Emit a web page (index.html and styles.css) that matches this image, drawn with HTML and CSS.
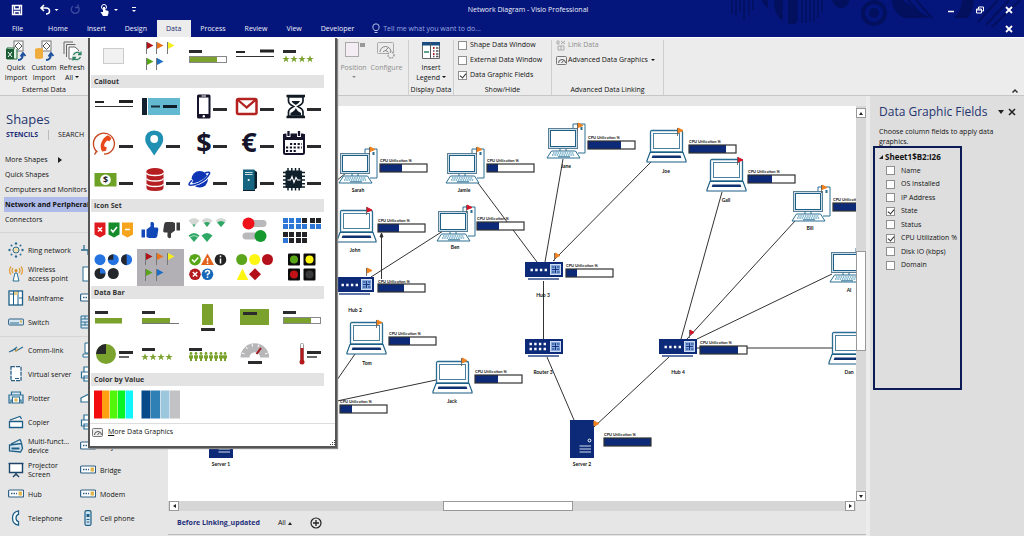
FILE: index.html
```html
<!DOCTYPE html>
<html lang="en">
<head>
<meta charset="utf-8">
<title>Network Diagram - Visio Professional</title>
<link rel="stylesheet" href="styles.css">
</head>
<body>
<svg class="defs" aria-hidden="true">
  <defs>
    <g id="flag"><path d="M0.5 0v12" stroke="#777" fill="none"/><path d="M1 0L7.500 3.500L1 7z"/></g>
    <path id="star" d="M0-3.700L1-1.100L3.700-1.100L1.500 0.500L2.300 3.200L0 1.600L-2.300 3.200L-1.500 0.500L-3.700-1.100L-1-1.100z" fill="#7aa22c"/>
    <rect id="dash" x="29" y="20" width="14" height="3" fill="#2b2b2e"/>
    <rect id="cap" x="5" y="12" width="13" height="3" fill="#2b2b2e"/>
    <g id="quad"><rect width="5" height="5"/><rect x="6" width="5" height="5"/><rect y="6" width="5" height="5"/><rect x="6" y="6" width="5" height="5"/></g>
    <g id="wifi"><path d="M-5.500 2.500Q0-2.500 5.500 2.500L0 9z"/></g>
    <g id="person"><circle cy="1.500" r="1.400"/><path d="M-2 3.200h4v3.300h-1v2.500h-2v-2.500h-1z"/></g>
    <g id="desktop">
      <path d="M25 2v-6h12v29h-7" fill="#fff" stroke="#2b6e93"/><rect x="32.500" y="-1" width="2" height="3" fill="#2b6e93"/>
      <rect x="0.500" y="0.500" width="29" height="20" fill="#cfdfe9" stroke="#5b7f95"/><rect x="2.500" y="2.500" width="25" height="16" fill="#fff" stroke="#1d5f86"/>
      <path d="M12 20.500v3h6v-3M9 23.500h12" fill="none" stroke="#2b6e93"/>
      <path d="M3.500 23h24l4.500 7h-33z" fill="#fff" stroke="#2b6e93"/>
      <path d="M5 25h21M4 27h23" stroke="#1e7fa8" stroke-width="1.200" stroke-dasharray="1.500 .8"/><path d="M10 28.800h12" stroke="#2b6e93"/>
    </g>
    <g id="laptop">
      <path d="M0.500 22V2Q0.500 0.500 2 0.500H31Q32.500 0.500 32.500 2V22z" fill="#fff" stroke="#2b6e93" stroke-width="1.300"/>
      <rect x="3.500" y="3.500" width="26" height="15" fill="#fff" stroke="#4c7f9d"/>
      <path d="M0 22.500h33l3 8v1.500h-39v-1.500z" fill="#fff" stroke="#1d5f86" stroke-width="1.200"/>
      <path d="M2.500 25.500h28l.8 2.500h-29.600z" fill="#10316f"/>
    </g>
    <g id="hub"><rect width="38" height="15" fill="#0c2a78"/><path d="M3 17h31" stroke="#0c2a78" stroke-width="1.300"/>
      <rect x="25.500" y="2.500" width="10" height="10" fill="#86a9dd" stroke="#cfdcf2"/><path d="M27 5h2.500M32 5h2.500M27 10h2.500M32 10h2.500M30.500 4v7M27 7.500h7" stroke="#0c2a78" stroke-width=".9"/></g>
    <path id="ports" d="M5.500 8h17" stroke="#fff" stroke-width="2.400" stroke-dasharray="2.400 2.300"/>
    <g id="server"><rect width="24" height="38" fill="#0c2a78"/><circle cx="19.500" cy="20.500" r="1.400" fill="none" stroke="#fff"/><path d="M9.500 26h11.500M9.500 29h11.500M9.500 32h11.500" stroke="#d5dff0" stroke-width="1.200"/></g>
    <rect id="frame" width="47" height="8" fill="none" stroke="#333" stroke-width="1.200"/>
    <g id="printer" fill="#fff" stroke="#2b6e93" stroke-width="1.200"><path d="M4 6V1h9v5M1.500 6h13v6h-13zM4 10h8v5H4z"/></g>
    <g id="box"><rect x=".600" y="4" width="15" height="7" rx="1" fill="#fff" stroke="#2b5f86" stroke-width="1.200"/><path d="M3 7.500h6" stroke="#2b5f86" stroke-width="1.300" stroke-dasharray="1.500 1"/><rect x="10.500" y="5.500" width="3.500" height="4" fill="#e0b34b"/></g>
    <g id="gauge" fill="none" stroke="#777"><rect x=".500" y="1.500" width="10" height="8" rx="1" fill="#eee"/><path d="M2.500 8a3.500 3.500 0 0 1 7 0M5.500 8l2-2.500" stroke="#555"/></g>
  </defs>
</svg>

<div class="app">
  <header class="top">
    <svg class="art" viewBox="0 0 300 28" aria-hidden="true">
      <g stroke="#03105e" stroke-width="1.500" fill="none">
        <path d="M8 0v14M12 0v15M16 0v12M20 0v20M25 0v15M29 0v10" /><path d="M73 0v22M78 0v23M82 0v23M86 0v22M90 0v21M94 0v18M98 0v12"/>
        <path d="M176 0l16 18M184 0l16 18M192 0l16 18M262 25L285 0M254 22L274 0M268 27L296 0" stroke-width="2"/>
        <circle cx="150" cy="13" r="11" stroke-width="4"/>
      </g>
      <g fill="#03105e"><path d="M38 0h6v8q-5-3-6-8zM50 0h9v21q-9-5-9-21zM64 0h8v24h-8z"/><circle cx="150" cy="13" r="5"/><path d="M108 0h18q-3 8-9 8t-9-8zM168 0h10l28 18h-26q-12-6-12-18zM238 0h12q-1 12-6 18h-14q8-8 8-18z"/></g>
    </svg>
    <div class="titlebar">
      <div class="quick">
        <button aria-label="Save"><svg width="12" height="12" viewBox="0 0 12 12"><path d="M1.500 1.500h9v9h-9zM3.500 1.500v3.500h5V1.500M3.500 10.500V7.500h5v3" fill="none" stroke="#fff" stroke-width="1.400"/></svg></button>
        <button class="wide" aria-label="Undo"><svg width="20" height="12" viewBox="0 0 20 12"><path d="M5 1L2 4l3 3M2 4h5q3.500 0 3.500 3T7 10" fill="none" stroke="#fff" stroke-width="1.600"/><path d="M15.500 5h4l-2 2z" fill="#fff"/></svg></button>
        <button aria-label="Repeat"><svg width="12" height="12" viewBox="0 0 12 12"><path d="M8.500 2A4 4 0 1 1 4 2M9 .500v3h-3" fill="none" stroke="#3a4a9e" stroke-width="1.300"/></svg></button>
        <button class="wide touch" aria-label="Touch mode"><svg width="20" height="12" viewBox="0 0 20 12"><circle cx="5" cy="3" r="2.500" fill="none" stroke="#fff"/><path d="M4 3h2v3l3.500 1v2.500L8.500 12H4L1.500 8h2.500z" fill="#fff"/><path d="M15 5h4l-2 2z" fill="#fff"/></svg></button>
        <button class="custom" aria-label="Customize"><svg width="6" height="8" viewBox="0 0 6 8"><path d="M1 1.500h4" stroke="#fff"/><path d="M1 4h4L3 6z" fill="#fff"/></svg></button>
      </div>
      <h1>Network Diagram - Visio Professional</h1>
      <div class="winbtns">
        <button aria-label="Minimize"><svg width="10" height="10" viewBox="0 0 10 10"><path d="M2 6.500h6" stroke="#fff" stroke-width="1.500"/></svg></button>
        <button aria-label="Restore"><svg width="10" height="10" viewBox="0 0 10 10"><path d="M3.500 4V2h5v4h-1.500M1.500 4h5v4h-5zM1.500 5h5" fill="none" stroke="#fff"/></svg></button>
        <button aria-label="Close"><svg width="10" height="10" viewBox="0 0 10 10"><path d="M2 2l6 6M8 2l-6 6" stroke="#fff" stroke-width="1.800"/></svg></button>
      </div>
    </div>
    <nav class="tabs">
      <button class="file">File</button><button>Home</button><button>Insert</button><button>Design</button><button class="on">Data</button><button>Process</button><button>Review</button><button>View</button><button>Developer</button>
      <label class="tell"><svg width="8" height="11" viewBox="0 0 8 11"><path d="M2.500 7.500Q.8 5.500.8 4a3.200 3.200 0 0 1 6.400 0q0 1.500-1.700 3.500zM2.500 9.500h3" fill="none" stroke="#b9c2ea"/></svg><input type="text" aria-label="Tell me" placeholder="Tell me what you want to do..."></label>
      <button class="closedoc" aria-label="Close document"><svg width="10" height="10" viewBox="0 0 10 10"><path d="M2 2l6 6M8 2l-6 6" stroke="#fff" stroke-width="1.800"/></svg></button>
    </nav>
  </header>

  <section class="ribbon">
    <div class="group external">
      <div class="bigs">
        <button class="big"><svg width="22" height="22" viewBox="0 0 22 22"><rect x="9" y="1" width="9" height="10" fill="#fff" stroke="#777"/><path d="M10 6l3.500-3.500L17 6l-3.500 3.500z" fill="none" stroke="#555"/><path d="M2 8h8M2 8v11h10V9" fill="#dff0e4" stroke="#1e6b3a"/><rect x="1" y="9" width="8" height="10" fill="#1b5e36"/><path d="M3 12l4 5M7 12l-4 5" stroke="#fff"/><path d="M13 20q5 0 5-6M15.500 16.500L18 13l2.500 3" fill="none" stroke="#1c4f9c" stroke-width="1.800"/></svg><span>Quick<br>Import</span></button>
        <button class="big"><svg width="22" height="22" viewBox="0 0 22 22"><rect x="9" y="1" width="9" height="10" fill="#fff" stroke="#777"/><path d="M10 6l3.500-3.500L17 6l-3.500 3.500z" fill="none" stroke="#555"/><path d="M2 9q4-2 8 0v9q-4 2-8 0z" fill="#f0ac3c"/><path d="M13 20q5 0 5-6M15.500 16.500L18 13l2.500 3" fill="none" stroke="#1c4f9c" stroke-width="1.800"/></svg><span>Custom<br>Import</span></button>
        <button class="big"><svg width="22" height="22" viewBox="0 0 22 22"><path d="M3 14V2h9M5.500 17V4.500h9" fill="none" stroke="#666"/><path d="M8 7h6l3.500 3v9H8z" fill="#fff" stroke="#666"/><circle cx="16" cy="16" r="5" fill="#ececec"/><path d="M12.500 15a4 4 0 0 1 7-1M19.500 17a4 4 0 0 1-7 1M20 11.500v3h-3M12 20.500v-3h3" fill="none" stroke="#2c8560" stroke-width="1.300"/></svg><span>Refresh<br>All <i class="car"></i></span></button>
      </div>
      <div class="gname">External Data</div>
    </div>

    <div class="gallery">
      <div class="menu">
        <div class="cells">
          <button aria-label="No data graphic"><svg viewBox="0 0 47 37"><rect x="13.500" y="10.500" width="20" height="15" fill="#f1f1f1" stroke="#ccc"/></svg></button>
          <button aria-label="Flags"><svg viewBox="0 0 47 37"><use href="#flag" x="9" y="4" fill="#b01318"/><use href="#flag" x="19" y="4" fill="#e8731d"/><use href="#flag" x="30" y="4" fill="#f4ef1e"/><use href="#flag" x="9" y="20" fill="#58a618"/><use href="#flag" x="19" y="20" fill="#1e6fc4"/></svg></button>
          <button aria-label="Progress bar"><svg viewBox="0 0 47 37"><use href="#cap"/><rect x="5.500" y="18.500" width="37" height="6" fill="#fff" stroke="#888"/><rect x="6" y="19" width="27" height="5" fill="#7aa22c"/></svg></button>
          <button aria-label="Text line"><svg viewBox="0 0 47 37"><path d="M5 14h9" stroke="#222" stroke-width="2"/><path d="M29 13h14" stroke="#222" stroke-width="3"/><path d="M5 18.500h38" stroke="#333"/></svg></button>
          <button aria-label="Stars"><svg viewBox="0 0 47 37"><use href="#cap"/><use href="#star" x="8" y="21"/><use href="#star" x="16" y="21"/><use href="#star" x="24" y="21"/><use href="#star" x="32" y="21"/></svg></button>
        </div>
        <h2>Callout</h2>
        <div class="cells">
          <button aria-label="Text callout"><svg viewBox="0 0 47 37"><path d="M5 14h9" stroke="#222" stroke-width="2"/><path d="M29 13.500h14" stroke="#222" stroke-width="3"/><path d="M5 18.500h38" stroke="#333"/></svg></button>
          <button aria-label="Card callout"><svg viewBox="0 0 47 37"><rect x="5" y="10" width="5" height="17" fill="#10202e"/><rect x="11" y="10" width="32" height="17" fill="#62b9d0"/><path d="M14 18.500h9" stroke="#1a2b3a" stroke-width="2"/><path d="M26 18.500h14" stroke="#101c28" stroke-width="3"/></svg></button>
          <button aria-label="Phone"><svg viewBox="0 0 47 37"><rect x="13" y="6.500" width="13.500" height="24" rx="1.500" fill="#15142a"/><rect x="15" y="9.500" width="9.500" height="16.500" fill="#fff"/><path d="M17.500 8h4.500" stroke="#fff"/><circle cx="19.800" cy="28.200" r="1.200" fill="#fff"/><use href="#dash"/></svg></button>
          <button aria-label="Mail"><svg viewBox="0 0 47 37"><rect x="6" y="11" width="19.500" height="15" rx="1.500" fill="#fff" stroke="#b3221f" stroke-width="2.500"/><path d="M7 12l8.700 7.500L24.500 12" fill="none" stroke="#b3221f" stroke-width="2.300"/><use href="#dash"/></svg></button>
          <button aria-label="Hourglass"><svg viewBox="0 0 47 37"><path d="M8.500 8h18.500M8.500 29h18.500" stroke="#101a24" stroke-width="2.500"/><path d="M10.500 9v4q0 3 5 5.500q-5 2.500-5 5.500v4h14.500v-4q0-3-5-5.500q5-2.500 5-5.500V9z" fill="#fff" stroke="#101a24" stroke-width="1.700"/><path d="M13.500 13h8.500q-1 2.500-4.200 4q-3.300-1.500-4.300-4zM17.800 20q1 3 5.200 5v2.500h-10.500V25q4.300-2 5.300-5z" fill="#101a24"/><use href="#dash"/></svg></button>
          <button aria-label="Call"><svg viewBox="0 0 47 37"><path d="M7.500 27A10.500 10.500 0 1 1 14 29.200M4.500 29.500Q6.500 28 6.200 25" fill="none" stroke="#c4441c" stroke-width="1.300"/><path d="M18.500 10.500l3 2.800-2 3-2.500-.8q-3.200 3-2.700 6l2.400.8-.6 3.500-4 .7q-3-5 0-10.500t6.400-5.500z" fill="#e8481a"/><use href="#dash"/></svg></button>
          <button aria-label="Pin"><svg viewBox="0 0 47 37"><path d="M17.200 5.500q9 .500 9 9q0 4-5 10l-4 6l-4-6q-5-6-5-10q0-8.500 9-9z" fill="#1f8fb2"/><circle cx="17.200" cy="14" r="3.900" fill="#fff"/><use href="#dash"/></svg></button>
          <button aria-label="Dollar"><svg viewBox="0 0 47 37"><text class="cur" x="20" y="27">$</text><use href="#dash"/></svg></button>
          <button aria-label="Euro"><svg viewBox="0 0 47 37"><text class="cur" x="18" y="27">€</text><use href="#dash"/></svg></button>
          <button aria-label="Calendar"><svg viewBox="0 0 47 37"><rect x="6" y="9.500" width="20" height="19.500" rx="1.500" fill="#fff" stroke="#15142a" stroke-width="2"/><path d="M5 9h22v6H5z" fill="#15142a"/><path d="M10.500 6v6M21 6v6" stroke="#fff" stroke-width="4"/><path d="M10.500 6v5M21 6v5" stroke="#15142a" stroke-width="2.300"/><path d="M12 19h12M8 22.500h16M8 26h10" stroke="#15142a" stroke-width="2.200" stroke-dasharray="2.200 1.600"/><use href="#dash"/></svg></button>
          <button aria-label="Money"><svg viewBox="0 0 47 37"><rect x="4.500" y="11" width="22" height="13.500" fill="#6ea227"/><circle cx="15.500" cy="17.800" r="5.300" fill="#fff"/><text class="coin" x="15.500" y="21">$</text><use href="#dash"/></svg></button>
          <button aria-label="Database"><svg viewBox="0 0 47 37"><path d="M9.500 9v17q0 3 8.500 3t8.500-3V9z" fill="#b51f22"/><ellipse cx="18" cy="9" rx="8.500" ry="3" fill="#b51f22"/><path d="M9.500 11q1 2.500 8.500 2.500t8.500-2.500M9.500 16.500q1 2.500 8.500 2.500t8.500-2.500M9.500 22q1 2.500 8.500 2.500t8.500-2.500" fill="none" stroke="#fff" stroke-width="1.400"/><use href="#dash"/></svg></button>
          <button aria-label="Planet"><svg viewBox="0 0 47 37"><circle cx="15.700" cy="17.300" r="8.300" fill="#0d35b5"/><path d="M22 10.500q5-1.500 4 1.200q-3 6-11 9.500q-8 3-10 1.500q-.500-2 3.500-5" fill="none" stroke="#fff" stroke-width="3"/><path d="M20.500 11q6-2 5 .7q-3 6-11 9.500q-8 3-9.500 1.500q-.3-1.500 3-4.500" fill="none" stroke="#0d35b5" stroke-width="1.500"/><use href="#dash"/></svg></button>
          <button aria-label="Server"><svg viewBox="0 0 47 37"><path d="M23 8l3 2v16l-3 2z" fill="#0c1f2b"/><rect x="12" y="7.500" width="11.500" height="21" fill="#176681"/><path d="M14 10.500h7.500M14 12.500h7.500" stroke="#fff" stroke-width=".8"/><circle cx="17.700" cy="18" r="1.100" fill="#fff"/><path d="M12 28.500h12" stroke="#0c1f2b"/><use href="#dash"/></svg></button>
          <button aria-label="Chip"><svg viewBox="0 0 47 37"><path d="M10 6v22.500M13.800 6v22.500M17.500 6v22.500M21.200 6v22.500M5 10.500h22M5 14.200h22M5 18h22M5 21.800h22M5 25h22" stroke="#10202b" stroke-width="1.500"/><rect x="7.500" y="8.500" width="16.500" height="17.500" rx="1" fill="#10202b"/><path d="M9.500 18h3l1.500-3.500 2 6 2-5 1.500 2.500h3" fill="none" stroke="#fff" stroke-width="1.100"/><use href="#dash"/></svg></button>
        </div>
        <h2>Icon Set</h2>
        <div class="cells">
          <button aria-label="Shields"><svg viewBox="0 0 47 37"><path d="M4.500 10.500h11v12l-5.500 3-5.500-3z" fill="#e01b1f"/><path d="M18.500 10.500h11v12l-5.500 3-5.500-3z" fill="#168c2c"/><path d="M32 10.500h11v12l-5.500 3-5.500-3z" fill="#f5a41b"/><path d="M8 15.500l4 4M12 15.500l-4 4M21 17.500l2 2.500 4-5M35 17.500h5" fill="none" stroke="#fff" stroke-width="1.600"/></svg></button>
          <button aria-label="Thumbs"><svg viewBox="0 0 47 37"><path d="M4.500 17.500h3.500v8H4.500zM9.500 17.500l4-3V11q0-1.500 2-1t1.500 3.500v2h3q1.500 0 1.300 2l-1 6.500q-.500 2-2 2H12l-2.500-1z" fill="#1247b8"/><path d="M43 18.500h-3.500v-8H43zM38 18.500l-4 3V25q0 1.500-2 1t-1.500-3.500v-2h-3q-1.500 0-1.300-2l1-6.500q.500-2 2-2h6.300l2.500 1z" fill="#3c3c3e"/></svg></button>
          <button aria-label="Signal"><svg viewBox="0 0 47 37"><g fill="#d3d8d5"><use href="#wifi" x="10" y="6"/><use href="#wifi" x="23" y="6"/><use href="#wifi" x="37" y="6"/></g><g fill="#2fa866"><path d="M8.500 12.500h3L10 15zM20 11q3-2 6 0L23 15zM33 10.500q4-3 8 0L37 15z"/><use href="#wifi" x="10" y="21"/><use href="#wifi" x="23" y="21"/></g><g fill="none" stroke="#fff" stroke-width=".6"><path d="M6 25q4-3 8 0"/></g></svg></button>
          <button aria-label="Toggles"><svg viewBox="0 0 47 37"><rect x="14" y="8" width="21.500" height="7" rx="3.500" fill="#b9b9bb"/><circle cx="17.500" cy="11.500" r="6" fill="#f0101a"/><rect x="11.500" y="20.500" width="21" height="7" rx="3.500" fill="#b9b9bb"/><circle cx="29.500" cy="24" r="6" fill="#15992f"/></svg></button>
          <button aria-label="Tiles"><svg viewBox="0 0 47 37"><g fill="#2f77d6"><use href="#quad" x="5" y="6"/><use href="#quad" x="18" y="6"/><use href="#quad" x="32" y="6"/></g><g fill="#222327"><rect x="24" y="6" width="5" height="5"/><rect x="32" y="6" width="5" height="5"/><rect x="38" y="6" width="5" height="5"/><use href="#quad" x="5" y="20"/><use href="#quad" x="18" y="20"/></g><rect x="5" y="26" width="5" height="5" fill="#2f77d6"/></svg></button>
          <button aria-label="Quarters"><svg viewBox="0 0 47 37"><g fill="#2573e0"><circle cx="10" cy="10.700" r="5.500"/><circle cx="23.300" cy="10.700" r="5.500"/><circle cx="36.600" cy="10.700" r="5.500"/></g><g fill="#23262b"><path d="M23.300 10.700V5.200a5.500 5.500 0 0 0-5.500 5.500zM36.600 5.200a5.500 5.500 0 0 0 0 11z"/><circle cx="10" cy="24.500" r="5.500"/><circle cx="23.300" cy="24.500" r="5.500"/></g><path d="M10 24.500V19a5.500 5.500 0 0 1 5.500 5.500z" fill="#2573e0"/></svg></button>
          <button class="sel" aria-label="Flag set"><svg viewBox="0 0 47 37"><use href="#flag" x="8" y="4" fill="#b01318"/><use href="#flag" x="19" y="4" fill="#e8731d"/><use href="#flag" x="30" y="4" fill="#f4ef1e"/><use href="#flag" x="8" y="20" fill="#58a618"/><use href="#flag" x="19" y="20" fill="#1e6fc4"/></svg></button>
          <button aria-label="Status"><svg viewBox="0 0 47 37"><circle cx="11" cy="10.700" r="5.800" fill="#58a618"/><path d="M23.500 4.500l6.500 11.500H17z" fill="#e3631c"/><circle cx="36.500" cy="10.700" r="5.800" fill="#222"/><circle cx="11" cy="25.300" r="5.800" fill="#b3191d"/><circle cx="23.500" cy="25.300" r="5.800" fill="#1668b8"/><path d="M8 10.500l2.300 2.500 4-4.500M23.500 9v3.500M23.500 13.500v1.500M36.500 6.500v1.800M36.500 9.500v5M8.800 23l4.500 4.500M13.300 23l-4.500 4.500M21.500 23.500q0-2 2-2t2 1.700q0 1.300-2 2.300v1M23.500 27.500v1.500" fill="none" stroke="#fff" stroke-width="1.500"/></svg></button>
          <button aria-label="Lights"><svg viewBox="0 0 47 37"><circle cx="10.700" cy="10.500" r="5.500" fill="#5aa51c"/><circle cx="23.700" cy="10.500" r="5.500" fill="#fdf512"/><circle cx="36.500" cy="10.500" r="5.500" fill="#b4101a"/><path d="M11.500 19.500l5.800 11.500H5.700z" fill="#fdf512"/><path d="M24 19.300l6 6-6 6-6-6z" fill="#b4101a"/></svg></button>
          <button aria-label="Signals"><svg viewBox="0 0 47 37"><g fill="#0c0c0c"><rect x="10" y="4.500" width="12" height="12" rx="1"/><rect x="25.500" y="4.500" width="12" height="12" rx="1"/><rect x="10" y="19.500" width="12" height="12" rx="1"/><rect x="25.500" y="19.500" width="12" height="12" rx="1"/></g><circle cx="16" cy="10.500" r="4" fill="#58a618"/><circle cx="31.500" cy="10.500" r="4" fill="#fdf512"/><circle cx="16" cy="25.500" r="4" fill="#c11218"/><circle cx="31.500" cy="25.500" r="4" fill="#37393b"/></svg></button>
        </div>
        <h2>Data Bar</h2>
        <div class="cells">
          <button aria-label="Bar"><svg viewBox="0 0 47 37"><use href="#cap"/><rect x="5" y="19" width="27" height="5.500" fill="#7aa22c"/></svg></button>
          <button aria-label="Bar with line"><svg viewBox="0 0 47 37"><use href="#cap"/><rect x="5" y="19" width="28" height="5.500" fill="#7aa22c"/><path d="M5 24.500h37" stroke="#777"/></svg></button>
          <button aria-label="Column"><svg viewBox="0 0 47 37"><rect x="18" y="5" width="11" height="21" fill="#7aa22c"/><rect x="17" y="29" width="14" height="3" fill="#2b2b2e"/></svg></button>
          <button aria-label="Block"><svg viewBox="0 0 47 37"><rect x="9" y="10" width="29" height="16" fill="#7aa22c"/><rect x="12" y="13" width="14" height="3" fill="#2b2b2e"/></svg></button>
          <button aria-label="Progress"><svg viewBox="0 0 47 37"><use href="#cap"/><rect x="5.500" y="18.500" width="37" height="6" fill="#fff" stroke="#888"/><rect x="6" y="19" width="27" height="5" fill="#7aa22c"/></svg></button>
          <button aria-label="Pie"><svg viewBox="0 0 47 37"><circle cx="16" cy="18" r="10" fill="#7aa22c"/><path d="M16 18V8A10 10 0 0 0 6 18z" fill="#26282a"/><rect x="29" y="15" width="14" height="3" fill="#2b2b2e"/><rect x="29" y="20" width="10" height="2" fill="#666"/></svg></button>
          <button aria-label="Star rating"><svg viewBox="0 0 47 37"><use href="#cap"/><use href="#star" x="8" y="21"/><use href="#star" x="16" y="21"/><use href="#star" x="24" y="21"/><use href="#star" x="32" y="21"/></svg></button>
          <button aria-label="People"><svg viewBox="0 0 47 37"><use href="#cap"/><g fill="#7aa22c"><use href="#person" x="7" y="16"/><use href="#person" x="12" y="16"/><use href="#person" x="17" y="16"/><use href="#person" x="22" y="16"/><use href="#person" x="27" y="16"/><use href="#person" x="32" y="16"/><use href="#person" x="37" y="16"/><use href="#person" x="41" y="16"/></g></svg></button>
          <button aria-label="Speedometer"><svg viewBox="0 0 47 37"><path d="M9.500 21.500a14.300 14.300 0 0 1 28.600 0h-9a5.300 5.300 0 0 0-10.600 0z" fill="#b7b7b9"/><path d="M11 17l2.500 1M15 11l1.500 2M21 8l.5 2.500M28 8.500l-1 2.500M36.500 17l-2.500 1" stroke="#fff"/><path d="M25.500 18l4.500-6" stroke="#a3161c" stroke-width="2"/><rect x="17" y="25" width="14" height="3" fill="#2b2b2e"/></svg></button>
          <button aria-label="Thermometer"><svg viewBox="0 0 47 37"><rect x="22.500" y="7.500" width="3" height="18" rx="1" fill="#fff" stroke="#999"/><rect x="22.500" y="12" width="3" height="13" fill="#b3191d"/><circle cx="24" cy="26" r="2.500" fill="#b3191d"/><rect x="29" y="15" width="14" height="3" fill="#2b2b2e"/><rect x="29" y="20" width="10" height="2" fill="#666"/></svg></button>
        </div>
        <h2>Color by Value</h2>
        <div class="cells">
          <button aria-label="Rainbow"><svg viewBox="0 0 47 37"><rect x="4" y="4.500" width="8" height="28" fill="#f20c10"/><rect x="12" y="4.500" width="7.500" height="28" fill="#ff9f12"/><rect x="20" y="4.500" width="7.500" height="28" fill="#52f60a"/><rect x="28" y="4.500" width="7" height="28" fill="#08f424"/><rect x="35.500" y="4.500" width="7.500" height="28" fill="#10f5fa"/></svg></button>
          <button aria-label="Blues"><svg viewBox="0 0 47 37"><rect x="4.500" y="4.500" width="9" height="28" fill="#064a8a"/><rect x="14" y="4.500" width="9" height="28" fill="#2f80b4"/><rect x="23.500" y="4.500" width="9" height="28" fill="#9cc6dc"/><rect x="33" y="4.500" width="10" height="28" fill="#c2c2c4"/></svg></button>
        </div>
        <button class="more"><svg width="11" height="11" viewBox="0 0 11 11"><use href="#gauge"/></svg><span><u>M</u>ore Data Graphics</span></button>
        <svg class="grip" width="5" height="5" viewBox="0 0 5 5"><path d="M4 0h1v1H4zM2 2h1v1H2zM4 2h1v1H4zM0 4h1v1H0zM2 4h1v1H2zM4 4h1v1H4z" fill="#444"/></svg>
      </div>
    </div>

    <div class="group dim">
      <div class="bigs">
        <button class="big" disabled><svg width="24" height="22" viewBox="0 0 24 22"><rect x="3.500" y="2.500" width="13" height="14" fill="#f4eef4" stroke="#aaa"/><rect x="18" y="3" width="5" height="4" fill="#999"/></svg><span>Position<br><i class="car"></i></span></button>
        <button class="big" disabled><svg width="22" height="22" viewBox="0 0 22 22"><rect x="2.500" y="2.500" width="16" height="11" rx="1" fill="none" stroke="#aaa"/><path d="M5 12a5.500 5.500 0 0 1 11 0M10 11l4-4M8 12a3 3 0 0 1 5 0" fill="none" stroke="#888"/><circle cx="16" cy="15" r="3" fill="#eee" stroke="#999" stroke-width="1.500" stroke-dasharray="1.500 1"/></svg><span>Configure</span></button>
      </div>
    </div>
    <div class="group legend">
      <div class="bigs"><button class="big"><svg width="20" height="22" viewBox="0 0 20 22"><path d="M1.500 2.500h17v16h-17z" fill="#fff" stroke="#666"/><path d="M1 2h18v3.500H1z" fill="#1d4d80"/><path d="M9.500 3v15" stroke="#555"/><path d="M3 12h5" stroke="#2c8560" stroke-width="1.500"/><path d="M12 8h1.500M12 14h1.500" stroke="#b3191d" stroke-width="2"/><path d="M12 11h1.500M12 16.500h1.500M15 8h2.500M15 11h2.500M15 14h2.500M15 16.500h2.500" stroke="#555" stroke-width="1.300"/></svg><span>Insert<br>Legend <i class="car"></i></span></button></div>
      <div class="gname">Display Data</div>
    </div>
    <div class="group show">
      <div class="rows">
        <label><input type="checkbox">Shape Data Window</label>
        <label><input type="checkbox">External Data Window</label>
        <label><input type="checkbox" checked>Data Graphic Fields</label>
      </div>
      <div class="gname">Show/Hide</div>
    </div>
    <div class="group linking">
      <div class="rows">
        <button class="dimtext" disabled><svg width="11" height="11" viewBox="0 0 11 11"><path d="M1 1h2v3H1zM5 1l4 3M9 1L5 4M2 6h6v4H2zM5 6v4" fill="none" stroke="#aaa"/></svg>Link Data</button>
        <button><svg width="11" height="11" viewBox="0 0 11 11"><use href="#gauge"/></svg>Advanced Data Graphics <i class="car"></i></button>
      </div>
      <div class="gname">Advanced Data Linking</div>
    </div>
    <button class="collapse" aria-label="Collapse ribbon"><svg width="8" height="6" viewBox="0 0 8 6"><path d="M1.500 4.500L4 2l2.500 2.500" fill="none" stroke="#333" stroke-width="1.500"/></svg></button>
  </section>

  <main>
    <aside class="shapes">
      <h2>Shapes</h2>
      <div class="modes"><button class="cur-mode">STENCILS</button><button>SEARCH</button></div>
      <ul class="stencils">
        <li><a href="#">More Shapes <i class="tri"></i></a></li>
        <li><a href="#">Quick Shapes</a></li>
        <li><a href="#">Computers and Monitors</a></li>
        <li><a class="active" href="#">Network and Peripherals</a></li>
        <li><a href="#">Connectors</a></li>
      </ul>
      <ul class="kit">
        <li><svg viewBox="0 0 16 16"><circle cx="8" cy="8" r="3" fill="#f6dfae" stroke="#2b6e93"/><g fill="#2b6e93"><circle cx="8" cy="1.500" r="1.200"/><circle cx="8" cy="14.500" r="1.200"/><circle cx="1.500" cy="8" r="1.200"/><circle cx="14.500" cy="8" r="1.200"/><circle cx="3.500" cy="3.500" r="1"/><circle cx="12.500" cy="3.500" r="1"/><circle cx="3.500" cy="12.500" r="1"/><circle cx="12.500" cy="12.500" r="1"/></g></svg>Ring network</li>
        <li><svg viewBox="0 0 16 16"><path d="M1 8h14M4 3v5M11 3v5M8 8v5" stroke="#2b6e93" stroke-width="1.300"/></svg>Ethernet</li>
        <li><svg viewBox="0 0 16 16"><path d="M5 15l2-8h2l2 8z" fill="#fff" stroke="#2b6e93"/><circle cx="8" cy="4.500" r="1.500" fill="#d98a1d"/><path d="M5 2q-2 2.500 0 5M11 2q2 2.500 0 5M3 .500q-3 4 0 8M13 .500q3 4 0 8" fill="none" stroke="#e0a040" stroke-width="1.300"/></svg><span>Wireless<br>access point</span></li>
        <li><svg viewBox="0 0 16 16"><rect x="3" y="1" width="10" height="14" fill="#fff" stroke="#2b6e93"/></svg>Server</li>
        <li><svg viewBox="0 0 16 16"><rect x="1" y="1" width="13.500" height="14" fill="#fff" stroke="#1d5f86" stroke-width="1.300"/><path d="M5.500 1v14M10 1v14" stroke="#1d5f86"/><path d="M11 8h3M2 4h3" stroke="#1d5f86"/><rect x="6" y="2" width="4" height="3" fill="#e7c889"/></svg>Mainframe</li>
        <li><svg viewBox="0 0 16 16"><use href="#box"/></svg>Router</li>
        <li><svg viewBox="0 0 16 16"><rect x=".600" y="5" width="15" height="6" rx="1" fill="#d7e6ef" stroke="#2b5f86"/><path d="M2 9h9" stroke="#2b6e93"/><rect x="12" y="6.500" width="2" height="2" fill="#e0b34b"/></svg>Switch</li>
        <li><svg viewBox="0 0 16 16"><path d="M1 2h14v12H1zM1 5h14M1 8h14M1 11h14M5 2v3M10 5v3M5 8v3M10 11v3" fill="#dce9f2" stroke="#2b6e93"/></svg>Firewall</li>
      </ul>
      <ul class="kit second">
        <li><svg viewBox="0 0 16 16"><path d="M1 10l6-3 1 2 7-4M4 9l5-4" fill="none" stroke="#2b6e93" stroke-width="1.200"/><path d="M7 9.500l3-2.500" stroke="#e0a040" stroke-width="1.300"/></svg>Comm-link</li>
        <li><svg viewBox="0 0 16 16"><path d="M5 1h5v10H5zM3 12h7v3H3z" fill="#fff" stroke="#2b6e93"/></svg>Tower</li>
        <li><svg viewBox="0 0 16 16"><rect x="3" y=".700" width="10" height="14" fill="#fff" stroke="#2b5f86" stroke-width="1.300" stroke-dasharray="4 1"/><path d="M7 12.500h4" stroke="#2b5f86"/></svg>Virtual server</li>
        <li><svg viewBox="0 0 16 16"><use href="#printer"/></svg>Printer</li>
        <li><svg viewBox="0 0 16 16"><path d="M3.500 5V2h9v3M1 5h14v8h-2v-3H3v3H1z" fill="#d5e5ef" stroke="#2b6e93" stroke-width="1.200"/><rect x="4.500" y="7" width="7" height="6" fill="#fff" stroke="#2b6e93"/><rect x="6.500" y="8.500" width="3" height="3" fill="#e0b34b"/></svg>Plotter</li>
        <li><svg viewBox="0 0 16 16"><path d="M1 8l10-5 4 2v7H1z" fill="#fff" stroke="#2b6e93" stroke-width="1.200"/></svg>Scanner</li>
        <li><svg viewBox="0 0 16 16"><path d="M1.500 7.500h13v6h-13zM2 6l10-3.500 1.500 2.500" fill="#fff" stroke="#1d5f86" stroke-width="1.300"/></svg>Copier</li>
        <li><svg viewBox="0 0 16 16"><use href="#printer"/></svg>Fax</li>
        <li><svg viewBox="0 0 16 16"><path d="M3 6l9-4.500 1.500 3M1.500 7l12-1.500 1 5-2 3.500-11-1z" fill="#d5e5ef" stroke="#1d5f86" stroke-width="1.300"/><path d="M3.500 10.500h8" stroke="#1d5f86" stroke-width="2"/></svg><span>Multi-funct...<br>device</span></li>
        <li><svg viewBox="0 0 16 16"><use href="#box"/></svg>Projector</li>
        <li><svg viewBox="0 0 16 16"><path d="M.500 1.500h15M1.500 2v8.500h13V2M8 10.500v3M8 12l-3 3M8 12l3 3" fill="#fff" stroke="#1d4469" stroke-width="1.400"/></svg><span>Projector<br>Screen</span></li>
        <li><svg viewBox="0 0 16 16"><use href="#box"/></svg>Bridge</li>
        <li><svg viewBox="0 0 16 16"><use href="#box"/></svg>Hub</li>
        <li><svg viewBox="0 0 16 16"><use href="#box"/></svg>Modem</li>
        <li><svg viewBox="0 0 16 16"><path d="M10.500 .800q-6 1-6 7.200t6 7.200v-3.500q-2.500-.500-2.500-3.700t2.500-3.700z" fill="#fff" stroke="#1d5f86" stroke-width="1.300"/></svg>Telephone</li>
        <li><svg viewBox="0 0 16 16"><rect x="5" y=".600" width="6" height="14.800" rx="1.500" fill="#cfe2ee" stroke="#1d5f86" stroke-width="1.200"/><rect x="6.500" y="4" width="3" height="3" fill="#1d5f86"/><path d="M6.500 9.500h3M6.500 12h3" stroke="#1d5f86"/></svg>Cell phone</li>
      </ul>
    </aside>

    <section class="work">
      <div class="upper">
        <div class="page">
          <svg width="688" height="394" viewBox="168 106 688 394">
            <g class="wires">
              <path d="M478 183L537 262M563 159L545 262M651 162L553 261M543.500 281V339M547 357L574 420M594 427L669 357M722 192L681 339M795 221L687 339M832 274L697 339M697 348H832M443 231L371 277M381.500 279V236M346 173L336 181M355 354L337 380M436 380L337 401"/>
              <path d="M381.500 233l-1.500 4h3z" fill="#333"/>
            </g>
            <use href="#desktop" x="340" y="153"/><use href="#desktop" x="447" y="153"/><use href="#desktop" x="548" y="128"/><use href="#desktop" x="438" y="211"/><use href="#desktop" x="793" y="191"/><use href="#desktop" x="831" y="252"/>
            <use href="#laptop" x="650" y="130"/><use href="#laptop" x="710" y="159"/><use href="#laptop" x="340" y="210"/><use href="#laptop" x="350" y="322"/><use href="#laptop" x="436" y="361"/><use href="#laptop" x="832" y="332"/>
            <use href="#hub" x="525" y="262"/><use href="#hub" x="336" y="277"/><use href="#hub" x="525" y="339"/><use href="#hub" x="659" y="339"/>
            <use href="#ports" x="525" y="262"/><use href="#ports" x="336" y="277"/><use href="#ports" x="659" y="339"/><use href="#ports" x="524" y="336"/><use href="#ports" x="524" y="341"/>
            <use href="#server" x="570" y="420"/><use href="#server" x="209" y="420"/>
            <g class="flags">
              <path d="M370 147l5 2.500-5 2zM477 147l5 2.500-5 2zM578 123l5 2.500-5 2zM822 185l5 2.500-5 2zM678 128l5 2.500-5 2.500zM377 320l5 2.500-5 2.500zM462 358l5 2.500-5 2.500zM594 421l5 2.500-5 2.500zM367 268l5 2.500-5 2.500zM555 253l5 2.500-5 2.500z" fill="#f08220" stroke="#f08220"/>
              <path d="M467 205l5 2.500-5 2zM738 157.500l5 2.500-5 2zM367 207.500l5 2.500-5 2zM690 330l4 2.500-4 2z" fill="#d81428" stroke="#d81428"/>
              <path d="M369.500 147v8M476.500 147v8M577.500 123v8M821.500 185v8M677.500 128v8M376.500 320v8M461.500 358v8M366.500 268v8M554.500 253v8M466.500 205v8M737.500 157v8M366.500 207v8M689.500 330v8" stroke="#555" stroke-width=".8"/>
            </g>
            <g fill="#0c2a78">
              <rect x="380" y="164" width="22" height="8"/><rect x="487" y="164" width="11" height="8"/><rect x="588" y="141" width="33" height="8"/><rect x="689" y="145" width="37" height="8"/><rect x="748" y="175" width="24" height="8"/><rect x="833" y="203" width="28" height="8"/><rect x="378" y="224" width="21" height="8"/><rect x="477" y="222" width="22" height="8"/><rect x="566" y="269" width="11" height="8"/><rect x="378" y="284" width="26" height="8"/><rect x="389" y="337" width="21" height="8"/><rect x="475" y="375" width="23" height="8"/><rect x="340" y="405" width="12" height="8"/><rect x="700" y="346" width="38" height="8"/><rect x="604" y="438" width="47" height="8"/>
            </g>
            <g class="gaps"><rect x="738" y="346" width="9" height="8"/><rect x="499" y="222" width="25" height="8"/></g>
            <use href="#frame" x="380" y="164"/><use href="#frame" x="487" y="164"/><use href="#frame" x="588" y="141"/><use href="#frame" x="689" y="145"/><use href="#frame" x="748" y="175"/><use href="#frame" x="833" y="203"/><use href="#frame" x="378" y="224"/><use href="#frame" x="477" y="222"/><use href="#frame" x="566" y="269"/><use href="#frame" x="378" y="284"/><use href="#frame" x="389" y="337"/><use href="#frame" x="475" y="375"/><use href="#frame" x="340" y="405"/><use href="#frame" x="700" y="346"/><use href="#frame" x="604" y="438"/>
            <g class="cpu">
              <text x="380" y="162">CPU Utilization %</text><text x="487" y="162">CPU Utilization %</text><text x="588" y="139">CPU Utilization %</text><text x="689" y="143">CPU Utilization %</text><text x="748" y="173">CPU Utilization %</text><text x="833" y="201">CPU Utilization %</text><text x="378" y="222">CPU Utilization %</text><text x="477" y="220">CPU Utilization %</text><text x="566" y="267">CPU Utilization %</text><text x="378" y="283">CPU Utilization %</text><text x="389" y="335">CPU Utilization %</text><text x="475" y="373">CPU Utilization %</text><text x="340" y="403">CPU Utilization %</text><text x="700" y="344">CPU Utilization %</text><text x="604" y="436">CPU Utilization %</text>
            </g>
            <g class="names">
              <text x="358" y="192">Sarah</text><text x="464" y="192">Jamie</text><text x="566" y="168">Jane</text><text x="666" y="173">Joe</text><text x="726" y="202">Gail</text><text x="810" y="230">Bill</text><text x="849" y="292">Al</text><text x="355" y="252">John</text><text x="455" y="249">Ben</text><text x="543" y="297">Hub 3</text><text x="355" y="312">Hub 2</text><text x="367" y="365">Tom</text><text x="452" y="403">Jack</text><text x="543" y="374">Router 3</text><text x="678" y="374">Hub 4</text><text x="849" y="374">Dan</text><text x="582" y="466">Server 2</text><text x="221" y="466">Server 1</text>
            </g>
          </svg>
        </div>
        <div class="vscroll"><button aria-label="Scroll up"><i class="up"></i></button><div class="vthumb"></div><button aria-label="Scroll down"><i class="down"></i></button></div>
      </div>
      <div class="hscroll"><button aria-label="Scroll left"><i class="left"></i></button><div class="hthumb"></div><button aria-label="Scroll right"><i class="right"></i></button></div>
      <div class="sheets"><a href="#">Before Linking_updated</a><button>All <i class="up"></i></button><button aria-label="Add page"><svg width="12" height="12" viewBox="0 0 12 12"><circle cx="6" cy="6" r="5" fill="none" stroke="#222" stroke-width="1.200"/><path d="M6 3v6M3 6h6" stroke="#222" stroke-width="1.300"/></svg></button></div>
    </section>

    <aside class="fields">
      <header><h2>Data Graphic Fields</h2><button aria-label="Options"><i class="down"></i></button><button aria-label="Close pane"><svg width="8" height="8" viewBox="0 0 8 8"><path d="M1 1l6 6M7 1l-6 6" stroke="#222" stroke-width="1.600"/></svg></button></header>
      <p>Choose column fields to apply data graphics.</p>
      <div class="tree">
        <h3><i class="open"></i>Sheet1$B2:I26</h3>
        <div class="checks">
          <label><input type="checkbox">Name</label>
          <label><input type="checkbox">OS Installed</label>
          <label><input type="checkbox">IP Address</label>
          <label><input type="checkbox" checked>State</label>
          <label><input type="checkbox">Status</label>
          <label><input type="checkbox" checked>CPU Utilization %</label>
          <label><input type="checkbox">Disk IO (kbps)</label>
          <label><input type="checkbox">Domain</label>
        </div>
      </div>
    </aside>
  </main>
</div>
</body>
</html>
```
FILE: styles.css
```css
* { box-sizing: border-box; }
body { margin: 0; font: 500 7px/10px "Open Sans", "Noto Sans", sans-serif; color: #111; }
button, input { font: inherit; color: inherit; border: 0; background: none; padding: 0; margin: 0; }
h1, h2, h3, p, ul { margin: 0; padding: 0; font-weight: 400; }
ul { list-style: none; }
a { color: inherit; text-decoration: none; }
svg { display: block; flex: none; }
.defs { position: absolute; width: 0; height: 0; }
.app { display: flex; flex-direction: column; height: 100vh; overflow: hidden; background: #e6e6e6; }

/* title bar and tabs */
.top { position: relative; background: #04157b; color: #eef1fc; }
.art { position: absolute; right: 0; top: 0; width: 300px; height: 28px; }
.titlebar { position: relative; display: flex; align-items: center; height: 20px; }
.quick { flex: 0 0 140px; display: flex; align-items: center; gap: 10px; padding-left: 11px; }
.quick .wide { margin-left: 6px; }
.quick .touch { margin-left: 8px; }
.quick .custom { margin-left: 2px; }
.titlebar h1 { flex: 1; text-align: center; font-size: 7px; font-weight: 500; }
.winbtns { flex: 0 0 108px; display: flex; justify-content: flex-end; gap: 19px; padding-right: 10px; }
.tabs { position: relative; display: flex; align-items: stretch; height: 17px; padding-left: 3px; }
.tabs button { padding: 0 10px 0 9px; }
.tabs .file { padding-right: 16px; }
.tabs .on { background: #ececec; color: #1b2a70; }
.tell { display: flex; align-items: center; gap: 3px; padding-left: 8px; color: #b9c2ea; flex: 1; }
.tell input { flex: 1; outline: 0; }
.tell input::placeholder { color: #9aa7e0; opacity: 1; }
.tabs .closedoc { padding: 0 10px 0 0; }
.closedoc svg { margin: auto; }

/* ribbon */
.ribbon { position: relative; z-index: 2; display: flex; height: 59px; background: #ececec; border-top: 1px solid #fff; border-bottom: 1px solid #c6c6c6; }
.group { display: flex; flex-direction: column; justify-content: space-between; margin: 2px 0 0; }
.gname { text-align: center; line-height: 10px; white-space: nowrap; }
.bigs { display: flex; justify-content: center; }
.big { display: flex; flex-direction: column; align-items: center; line-height: 10px; min-width: 28px; }
.big svg { margin-bottom: 1px; }
.external { flex: 0 0 88px; }
.gallery { flex: 0 0 249px; position: relative; }
.dim { flex: 0 0 71px; color: #8c8c8c; }
.dim .bigs { gap: 3px; padding-right: 3px; }
.dim .big { color: #8c8c8c; }
.legend { flex: 0 0 45px; }
.legend, .show, .linking { border-left: 1px solid #cfcfcf; }
.show { flex: 0 0 98px; }
.linking { flex: 0 0 113px; border-right: 1px solid #cfcfcf; }
.rows { display: flex; flex-direction: column; align-items: flex-start; gap: 5px; padding-left: 4px; }
.rows label, .rows button { display: flex; align-items: center; gap: 3px; height: 10px; white-space: nowrap; }
.rows button { gap: 1px; }
.rows .dimtext { color: #8c8c8c; }
.collapse { margin: auto 5px 1px auto; }
.car { display: inline-block; border: 2px solid transparent; border-top-color: currentColor; border-bottom: 0; vertical-align: 2px; }
.rows .car { margin-left: 2px; }
input[type="checkbox"] { appearance: none; position: relative; width: 9px; height: 9px; background: #fff; border: 1px solid #8f8f8f; flex: none; }
input[type="checkbox"]:checked::after { content: ""; position: absolute; left: 2px; top: 0; width: 3px; height: 5px; border: solid #333; border-width: 0 1px 1px 0; transform: rotate(40deg); }

/* data graphics menu */
.menu { position: absolute; top: 0; left: 0; width: 249px; background: #fff; border: 1px solid #555; border-width: 0 2px 2px 2px; box-shadow: 1px 1px 1px #888; }
.cells { display: grid; grid-template-columns: repeat(5, 1fr); width: 235px; grid-auto-rows: 37px; }
.cells svg { width: 47px; height: 37px; overflow: visible; }
.cells .sel { background: #b2b0b5; }
.menu h2 { width: 233px; margin-left: 1px; padding-left: 3px; height: 13px; font-size: 7px; line-height: 13px; background: #e3e3e3; font-weight: 700; color: #333; }
.more { display: flex; align-items: center; gap: 5px; width: 100%; height: 17px; padding-left: 2px; border-top: 1px solid #ddd; }
.grip { margin: 0 0 1px auto; }
.cur { font: 700 27px "Open Sans", sans-serif; text-anchor: middle; fill: #15142a; }
.coin { font: 700 9px "Open Sans", sans-serif; text-anchor: middle; fill: #222; }

/* main area */
main { flex: 1; min-height: 0; display: flex; }
.shapes { flex: 0 0 168px; padding: 15px 3px 0 0; overflow: hidden; }
.shapes h2 { font-size: 13px; line-height: 16px; padding-left: 6px; color: #24346f; }
.modes { display: flex; gap: 10px; padding: 3px 0 0 6px; }
.modes button + button { border-left: 1px solid #bbb; padding-left: 9px; }
.modes .cur-mode { font-weight: 700; color: #1f2f7a; }
.stencils { padding: 12px 0 5px 4px; border-bottom: 1px solid #d6d6d6; }
.stencils a { display: flex; align-items: center; height: 15px; padding-left: 1px; white-space: nowrap; }
.stencils .active { background: #aebbe9; font-weight: 700; }
.tri { border: 3px solid transparent; border-left: 4px solid #222; border-right: 0; margin-left: 10px; }
.kit { display: grid; grid-template-columns: 72px 80px; grid-auto-rows: 24px; padding: 5px 0 2px 8px; }
.second { border-top: 1px solid #d6d6d6; padding-top: 1px; }
.kit li { display: flex; align-items: center; gap: 4px; line-height: 9px; white-space: nowrap; }
.kit svg { width: 16px; height: 16px; }

.work { flex: 1; min-width: 0; display: flex; flex-direction: column; padding-top: 10px; }
.upper { flex: 1; min-height: 0; display: flex; }
.page { flex: 1; min-width: 0; overflow: hidden; background: #fff; }
.vscroll { flex: 0 0 10px; display: flex; flex-direction: column; justify-content: space-between; background: #d8d8d8; padding: 2px 0 0; }
.vscroll button, .hscroll button { display: grid; place-items: center; width: 10px; height: 10px; background: #fff; border: 1px solid #999; }
.vthumb { height: 100px; background: #fff; border: 1px solid #999; margin-bottom: 8px; }
.hscroll { display: flex; justify-content: space-between; height: 10px; margin-right: 10px; background: #d6d6d6; padding: 0 1px; }
.hthumb { width: 130px; background: #fff; border: 1px solid #999; margin-right: 8px; }
.up, .down, .left, .right { display: inline-block; border: 2px solid transparent; }
.up { border-top: 0; border-bottom: 3px solid #222; }
.down { border-bottom: 0; border-top: 3px solid #222; }
.left { border-left: 0; border-right: 3px solid #222; }
.right { border-right: 0; border-left: 3px solid #222; }
.sheets { display: flex; align-items: center; gap: 18px; height: 24px; padding-left: 9px; margin-bottom: 1px; border-bottom: 1px solid #bbb; }
.sheets a { font-weight: 700; color: #1f2f7a; }
.wires { stroke: #333; fill: none; }
.gaps { fill: #fff; }
.cpu { font: 700 4px Lato, sans-serif; fill: #111; }
.names { font: 700 5px Lato, sans-serif; fill: #111; text-anchor: middle; }

.fields { flex: 0 0 158px; padding: 8px 4px 0 7px; border-left: 4px solid #ececec; background: #dedede; }
.fields header { display: flex; align-items: center; }
.fields h2 { flex: 1; white-space: nowrap; font-size: 12px; line-height: 16px; padding-left: 2px; color: #24346f; }
.fields header button { display: flex; margin-right: 4px; }
.fields header .down { border-width: 4px 3px 0; }
.fields p { padding: 7px 20px 0 2px; line-height: 10px; }
.tree { width: 89px; height: 244px; margin: -1px 0 0 -4px; border: 2px solid #0c1b56; padding: 3px 0 0 4px; overflow: hidden; }
.tree h3 { display: flex; align-items: center; gap: 2px; font-size: 8px; font-weight: 700; line-height: 12px; }
.open { width: 0; height: 0; border-left: 4px solid transparent; border-bottom: 4px solid #222; }
.checks { display: grid; grid-auto-rows: 1fr; height: 108px; margin-top: 1px; padding-left: 7px; }
.checks label { display: flex; align-items: center; gap: 6px; white-space: nowrap; }
```
